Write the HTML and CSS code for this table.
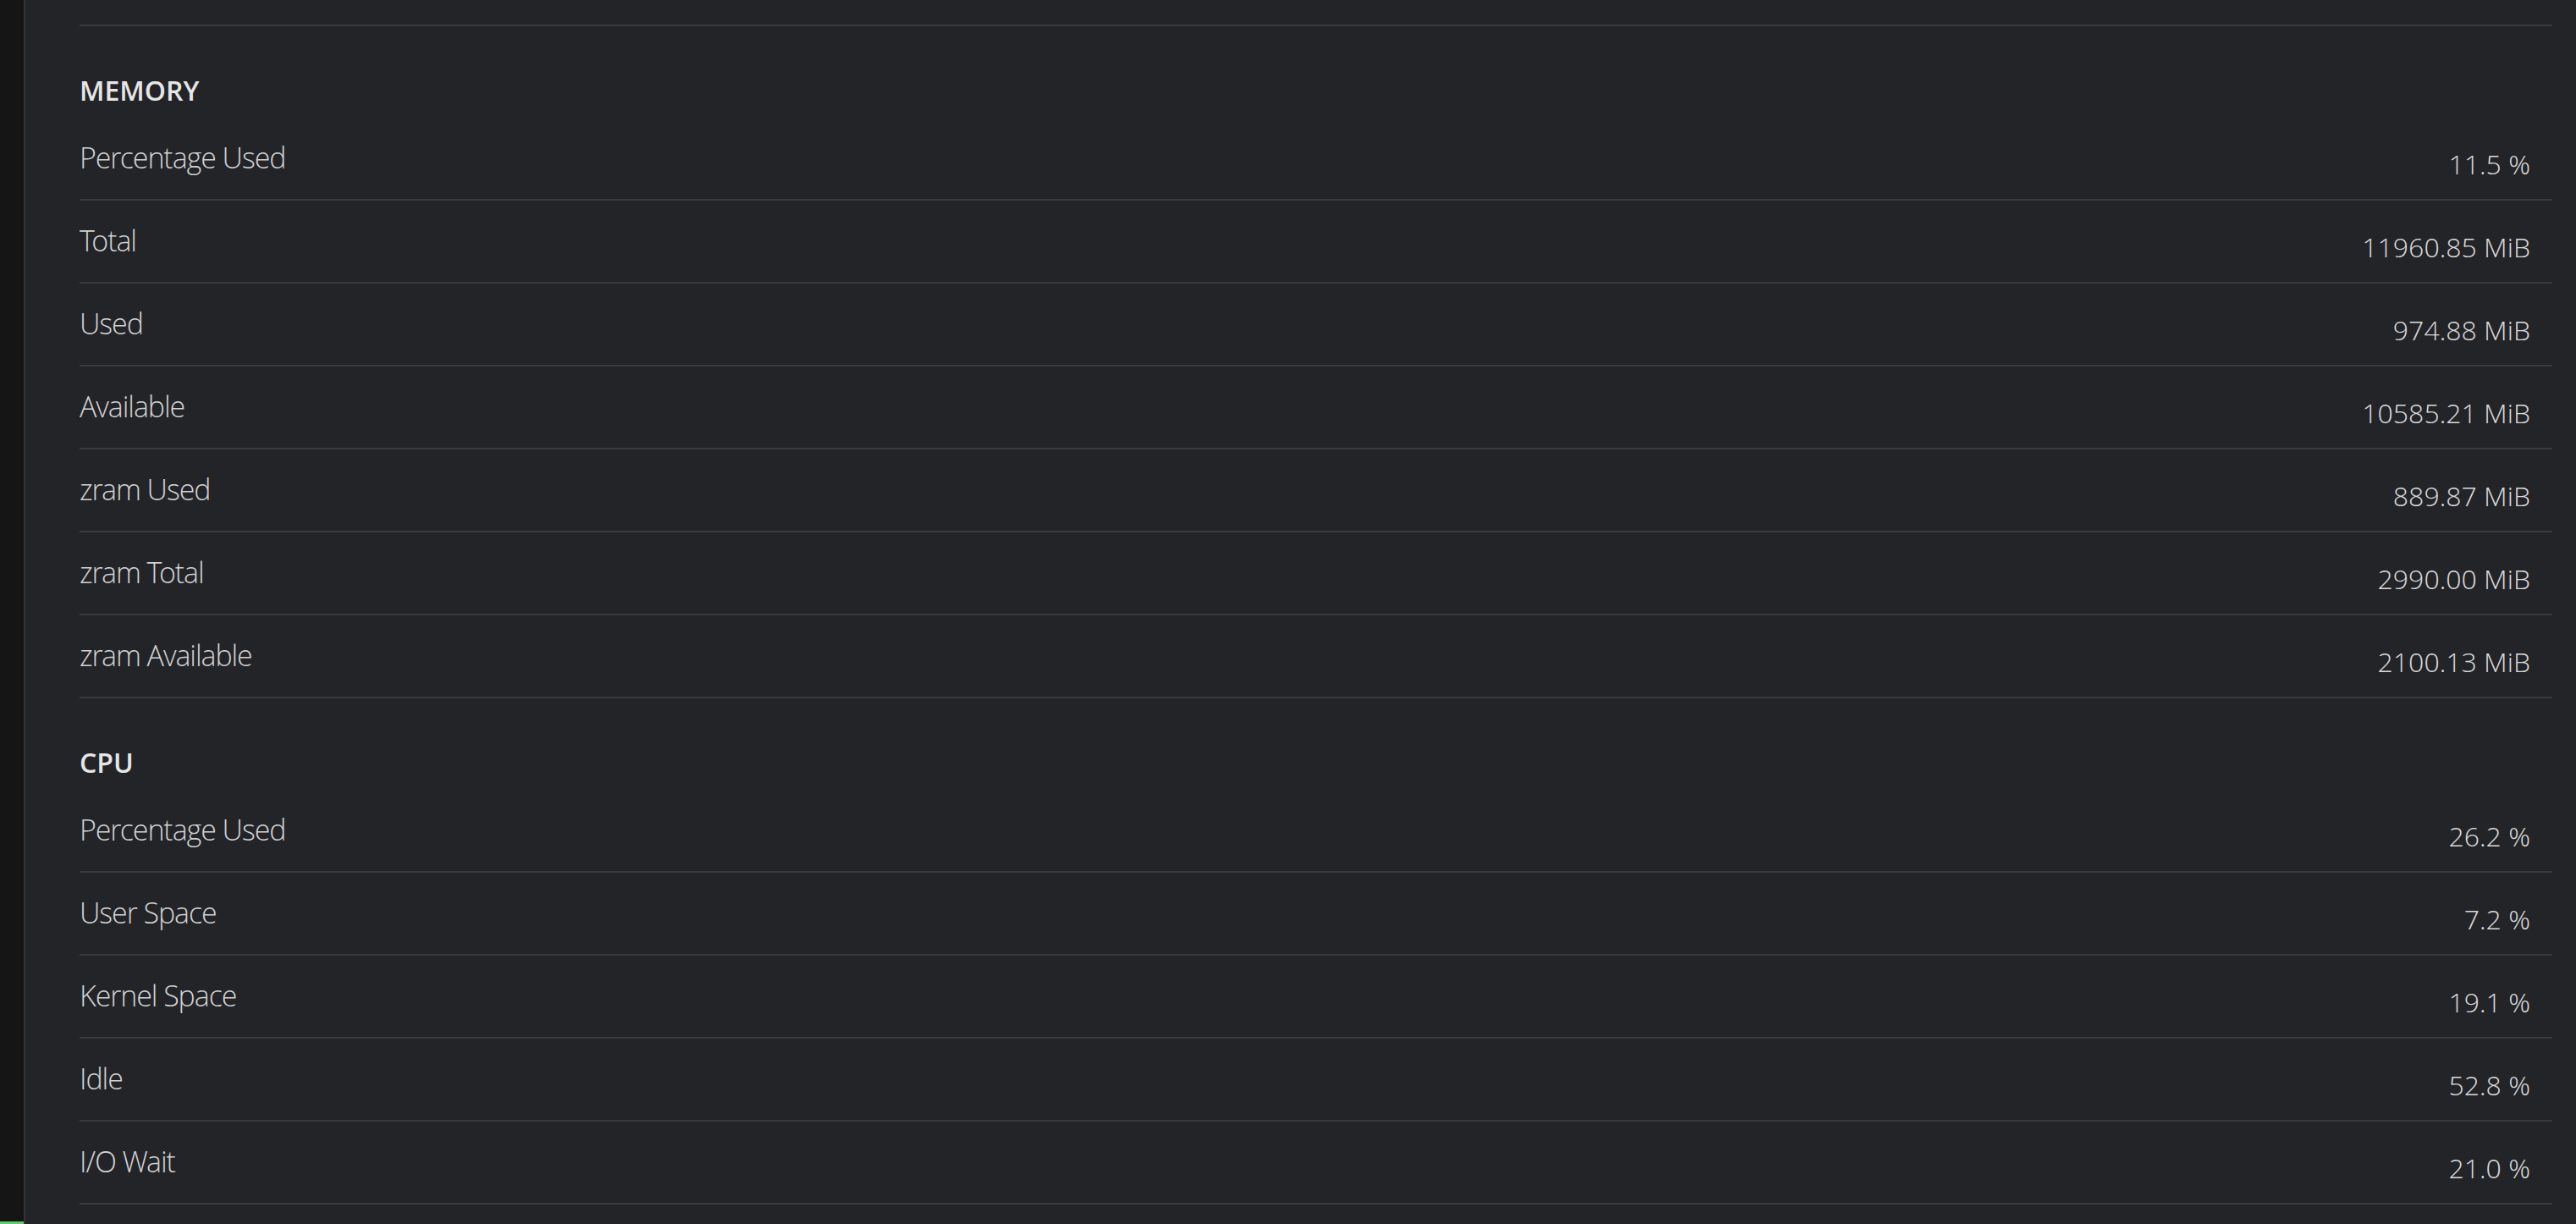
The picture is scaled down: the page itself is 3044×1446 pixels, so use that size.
FILE: index.html
```html
<!DOCTYPE html>
<html lang="en">
<head>
    <meta charset="UTF-8">
    <meta name="viewport" content="width=device-width, initial-scale=1.0">
    <title>System Info</title>
    <link rel="stylesheet" href="styles.css">
</head>
<body>

    <div class="layout">
        <!-- Sidebar kiri -->
        <aside class="sidebar">
            <div class="sidebar-active"></div>
        </aside>

        <!-- Panel utama -->
        <main class="panel">
            <div class="content">
                <div class="row row-stub"></div>

                <section class="section">
                    <h2>MEMORY</h2>
                    <div class="row"><span class="label">Percentage Used</span><span class="value">11.5 %</span></div>
                    <div class="row"><span class="label">Total</span><span class="value">11960.85 MiB</span></div>
                    <div class="row"><span class="label">Used</span><span class="value">974.88 MiB</span></div>
                    <div class="row"><span class="label">Available</span><span class="value">10585.21 MiB</span></div>
                    <div class="row"><span class="label">zram Used</span><span class="value">889.87 MiB</span></div>
                    <div class="row"><span class="label">zram Total</span><span class="value">2990.00 MiB</span></div>
                    <div class="row"><span class="label">zram Available</span><span class="value">2100.13 MiB</span></div>
                </section>

                <section class="section">
                    <h2>CPU</h2>
                    <div class="row"><span class="label">Percentage Used</span><span class="value">26.2 %</span></div>
                    <div class="row"><span class="label">User Space</span><span class="value">7.2 %</span></div>
                    <div class="row"><span class="label">Kernel Space</span><span class="value">19.1 %</span></div>
                    <div class="row"><span class="label">Idle</span><span class="value">52.8 %</span></div>
                    <div class="row"><span class="label">I/O Wait</span><span class="value">21.0 %</span></div>
                </section>
            </div>
        </main>
    </div>

</body>
</html>
```

FILE: styles.css
```css
/* Gaya umum */
* {
    margin: 0;
    padding: 0;
    box-sizing: border-box;
    font-family: 'Open Sans', 'Liberation Sans', sans-serif;
}

body {
    background: #232428;
    color: #e2e2e2;
    height: 100vh;
    overflow: hidden;
}

.layout {
    display: flex;
    height: 100vh;
}

/* Sidebar */
.sidebar {
    width: 30px;
    flex-shrink: 0;
    background: #151515;
    border-right: 2px solid #333335;
    display: flex;
    flex-direction: column;
    justify-content: flex-end;
}

.sidebar-active {
    height: 3px;
    background: #5fcf6a;
}

/* Panel utama */
.panel {
    flex: 1;
    background: #232428;
}

.content {
    margin: 0 28px 0 64px;
}

.row {
    display: flex;
    justify-content: space-between;
    align-items: flex-start;
    height: 98px;
    padding: 22px 26px 0 0;
    border-bottom: 2px solid #393a3d;
}

.row-stub {
    height: 31px;
    padding: 0;
}

.section {
    padding-top: 54px;
}

.section h2 {
    font-size: 32px;
    font-weight: 600;
    line-height: 44px;
    margin-bottom: 10px;
    color: #e6e6e6;
}

.label,
.value {
    font-family: 'Open Sans Light', 'Open Sans', 'Liberation Sans', sans-serif;
    font-weight: 300;
}

.label {
    font-size: 34px;
    letter-spacing: -1.1px;
    line-height: 48px;
    margin-top: 1px;
    color: #d2d2d2;
}

.value {
    font-size: 32px;
    line-height: 30px;
    margin-top: 18px;
    color: #dadada;
}
```
